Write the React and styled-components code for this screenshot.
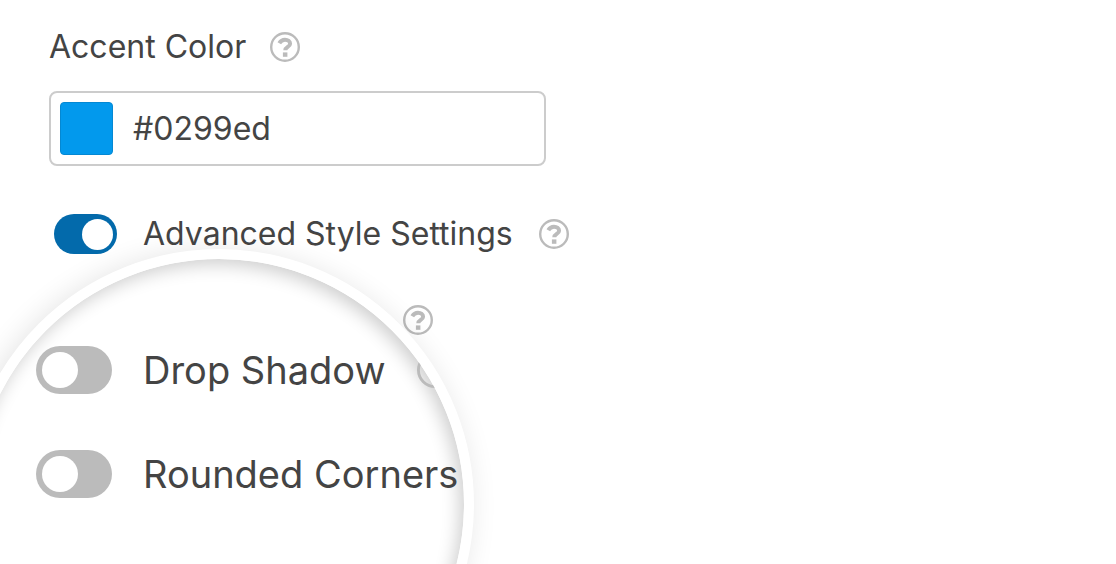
import React, { useState } from 'react'
import styled, { createGlobalStyle } from 'styled-components'

const GlobalStyle = createGlobalStyle`
    * {
        box-sizing: border-box;
    }

    body {
        margin: 0;
        background: #fff;
        color: #444;
        font-family: Inter, "Liberation Sans", sans-serif;
    }
`

const Panel = styled.main`
    position: relative;
    min-height: 100vh;
    padding: 27px 49px 0;
    overflow: hidden;
`

const FieldHeader = styled.div`
    display: flex;
    align-items: center;
    gap: 24px;
`

const FieldLabel = styled.label`
    font-size: ${props => props.$large ? '38px' : '32px'};
    line-height: 40px;
    white-space: nowrap;
`

const HelpButton = styled.button`
    display: flex;
    flex-shrink: 0;
    padding: 0;
    border: 0;
    background: none;
    color: #bbb;
    cursor: pointer;
`

const ColorField = styled.div`
    display: flex;
    align-items: center;
    gap: 20px;
    width: 100%;
    max-width: 497px;
    height: 75px;
    margin-top: 24px;
    padding: 0 9px;
    border: 2px solid #ccc;
    border-radius: 8px;
`

const Swatch = styled.button`
    flex-shrink: 0;
    width: 53px;
    height: 53px;
    padding: 0;
    border: 1px solid #0488d3;
    border-radius: 4px;
    background: ${props => props.$color};
`

const ColorInput = styled.input`
    flex: 1;
    min-width: 0;
    padding: 0;
    border: 0;
    outline: 0;
    background: none;
    color: inherit;
    font: inherit;
    font-size: 32px;
    line-height: 40px;
`

const ToggleRow = styled.div`
    display: flex;
    align-items: center;
    gap: 26px;
    margin-top: 48px;
    padding-left: 5px;
`

const Toggle = styled.input`
    display: flex;
    align-items: center;
    flex-shrink: 0;
    appearance: none;
    width: ${props => props.$large ? '76px' : '63px'};
    height: ${props => props.$large ? '48px' : '40px'};
    margin: 0;
    padding: 0 ${props => props.$large ? '6px' : '4px'};
    border-radius: 24px;
    background: #bbb;
    cursor: pointer;

    &::before {
        content: '';
        width: ${props => props.$large ? '36px' : '31px'};
        height: ${props => props.$large ? '36px' : '31px'};
        border-radius: 50%;
        background: #fff;
    }

    &:checked {
        justify-content: flex-end;
        background: #036aab;
    }
`

const HelpRow = styled.div`
    display: flex;
    justify-content: flex-end;
    width: 384px;
    margin-top: 51px;
`

// magnifier that floats over the lower options
const Lens = styled.section`
    position: absolute;
    top: 249px;
    left: -36px;
    display: flex;
    flex-direction: column;
    gap: 56px;
    width: 510px;
    height: 510px;
    padding: 87px 0 0 62px;
    overflow: hidden;
    border: 10px solid #fff;
    border-radius: 50%;
    background: #fff;
    box-shadow: -4px 2px 28px rgba(0, 0, 0, 0.11), inset -4px 5px 18px rgba(0, 0, 0, 0.2);
`

const LensRow = styled.div`
    display: flex;
    align-items: center;
    gap: 31px;
`

const HelpIcon = ({ size }) => (
    <svg width={size} height={size} viewBox="0 0 30 30" fill="none" aria-hidden="true">
        <circle cx="15" cy="15" r="13.8" stroke="currentColor" strokeWidth="2.4" />
        <path d="M9.3 11.3C10.6 8.9 12.3 7.7 15 7.7c2.9 0 5.1 1.6 5.1 4 0 3.3-4.8 3.1-4.8 6.5" stroke="currentColor" strokeWidth="4" />
        <path d="M12.9 20.4h4.5v4.4h-4.5z" fill="currentColor" />
    </svg>
)

const Help = ({ topic, size = 30 }) => (
    <HelpButton type="button" aria-label={`Help: ${topic}`}>
        <HelpIcon size={size} />
    </HelpButton>
)

const App = () => {
    const [color, setColor] = useState('#0299ed')

    return (
        <Panel>
            <GlobalStyle />
            <FieldHeader>
                <FieldLabel htmlFor="accent">Accent Color</FieldLabel>
                <Help topic="Accent Color" />
            </FieldHeader>
            <ColorField>
                <Swatch type="button" $color={color} aria-label="Pick a color" />
                <ColorInput id="accent" type="text" value={color} onChange={e => setColor(e.target.value)} />
            </ColorField>
            <ToggleRow>
                <Toggle id="advanced" type="checkbox" defaultChecked />
                <FieldLabel htmlFor="advanced">Advanced Style Settings</FieldLabel>
                <Help topic="Advanced Style Settings" />
            </ToggleRow>
            <HelpRow>
                <Help topic="Style" />
            </HelpRow>
            <Lens>
                <LensRow>
                    <Toggle id="shadow" type="checkbox" $large />
                    <FieldLabel htmlFor="shadow" $large>Drop Shadow</FieldLabel>
                    <Help topic="Drop Shadow" size={36} />
                </LensRow>
                <LensRow>
                    <Toggle id="corners" type="checkbox" $large />
                    <FieldLabel htmlFor="corners" $large>Rounded Corners</FieldLabel>
                </LensRow>
            </Lens>
        </Panel>
    )
}

export default App
